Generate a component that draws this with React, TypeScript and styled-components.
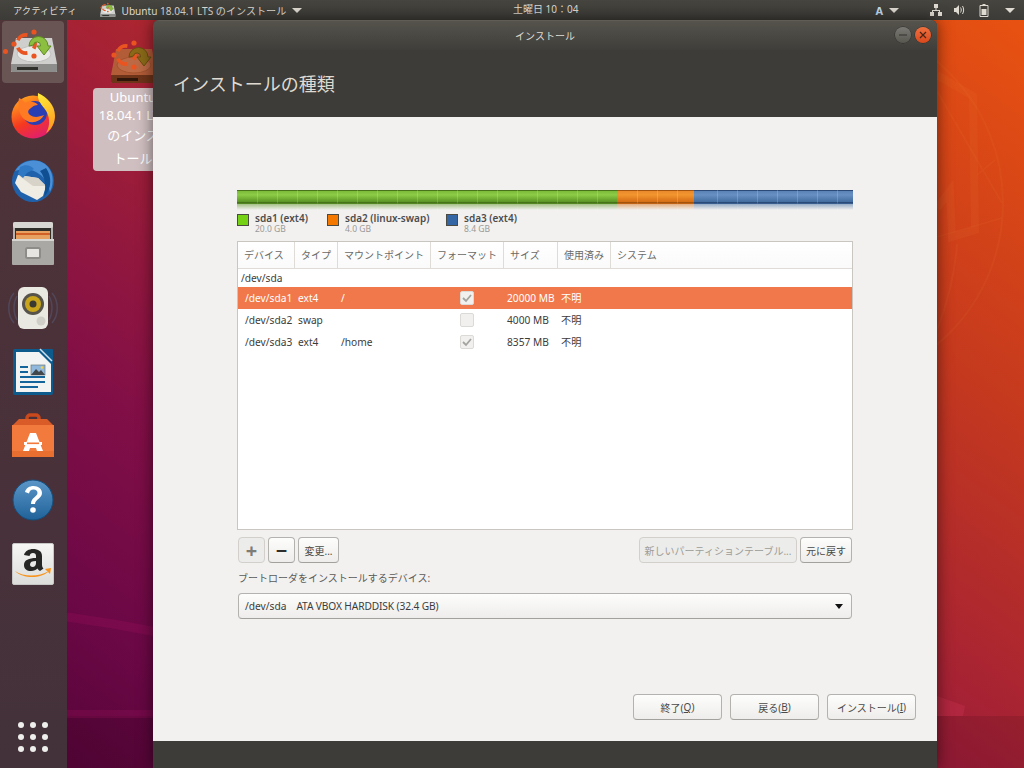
import React from "react";
import styled, { createGlobalStyle } from "styled-components";

const FONT = `"Noto Sans", "Noto Sans CJK JP", sans-serif`;

const Global = createGlobalStyle`
  html, body { margin: 0; padding: 0; width: 1024px; height: 768px; overflow: hidden; }
  body { font-family: ${FONT}; }
`;

const Screen = styled.div`
  position: relative;
  width: 1024px;
  height: 768px;
  display: flex;
  flex-direction: column;
  overflow: hidden;
  background: linear-gradient(to bottom left, #ea5310 0%, #c5391e 27%, #a32036 50%, #820f46 70%, #6c0846 85%, #520436 100%);
`;

const Wallpaper = styled.svg`
  position: absolute;
  inset: 0;
`;

const TopBar = styled.header`
  position: relative;
  height: 20px;
  flex: none;
  display: flex;
  align-items: center;
  padding: 0 9px 0 13px;
  background: linear-gradient(#46453f, #3c3b37);
  box-sizing: border-box;
  color: #dfdbd2;
  font-size: 10px;
`;

const Activities = styled.span`
  white-space: nowrap;
  font-size: 9.3px;
`;

const AppMenu = styled.div`
  display: flex;
  align-items: center;
  margin-left: 22px;
  gap: 6px;
`;

const BarLabel = styled.span`
  white-space: nowrap;
  font-size: 10.1px;
`;

const Clock = styled.span`
  position: absolute;
  left: 513px;
  top: 1px;
  white-space: nowrap;
`;

const Tray = styled.div`
  margin-left: auto;
  display: flex;
  align-items: center;
`;

const TrayItem = styled.div<{ $gap: number }>`
  display: flex;
  align-items: center;
  margin-left: ${(p) => p.$gap}px;
`;

const Caret = styled.i`
  display: block;
  width: 0;
  height: 0;
  border-left: 5px solid transparent;
  border-right: 5px solid transparent;
  border-top: 5px solid #dfdbd2;
`;

const LayoutA = styled.span`
  color: #c4dcf2;
  font-weight: 700;
  font-size: 11px;
  margin-right: 6px;
`;

const Body = styled.div`
  position: relative;
  flex: 1;
  display: flex;
`;

const Dock = styled.nav`
  position: relative;
  width: 67px;
  flex: none;
  display: flex;
  flex-direction: column;
  align-items: flex-start;
  gap: 2px;
  padding: 1px 0 0 2px;
  box-sizing: border-box;
  background: linear-gradient(#4f3438, #49313a 60%, #43323a);
`;

const DockItem = styled.div<{ $active?: boolean }>`
  position: relative;
  width: 62px;
  height: 62px;
  flex: none;
  border-radius: 4px;
  display: flex;
  align-items: center;
  justify-content: center;
  background: ${(p) => (p.$active ? "#695654" : "transparent")};
`;

const RunDot = styled.i`
  position: absolute;
  left: 1px;
  top: 28px;
  width: 5px;
  height: 5px;
  border-radius: 50%;
  background: #e95420;
`;

const DockGrid = styled.div`
  margin-top: auto;
  margin-bottom: 16px;
  margin-left: 16px;
  display: grid;
  grid-template-columns: repeat(3, 6px);
  gap: 6px;
`;

const Dot = styled.i`
  width: 6px;
  height: 6px;
  border-radius: 50%;
  background: #eeeeec;
`;

const DesktopIcon = styled.div`
  position: absolute;
  left: 93px;
  top: 18px;
  width: 80px;
  display: flex;
  flex-direction: column;
  align-items: center;
`;

const DesktopLabel = styled.div`
  width: 80px;
  height: 83px;
  box-sizing: border-box;
  border-radius: 4px;
  background: #d0bfc1;
  color: #fff;
  font-size: 13px;
  text-align: center;
  white-space: nowrap;
  overflow: hidden;
`;

const DesktopLine = styled.div<{ $h: number }>`
  height: ${(p) => p.$h}px;
  line-height: ${(p) => p.$h}px;
`;

const Win = styled.section`
  position: absolute;
  left: 153px;
  top: 0;
  width: 784px;
  height: 748px;
  display: flex;
  flex-direction: column;
  border-radius: 6px 6px 0 0;
  overflow: hidden;
  box-shadow: 0 0 16px rgba(0, 0, 0, 0.55);
  background: #3d3c38;
`;

const TitleBar = styled.div`
  height: 30px;
  flex: none;
  position: relative;
  display: flex;
  align-items: center;
  justify-content: center;
  background: linear-gradient(#55534c, #3f3e3a);
  border-top: 1px solid #5f5d55;
  box-sizing: border-box;
  color: #dfdbd2;
  font-size: 10px;
`;

const WinButtons = styled.div`
  position: absolute;
  right: 6px;
  top: 6px;
  display: flex;
  gap: 4px;
`;

const RoundBtn = styled.div<{ $close?: boolean }>`
  width: 16px;
  height: 16px;
  border-radius: 50%;
  display: flex;
  align-items: center;
  justify-content: center;
  background: ${(p) =>
    p.$close ? "linear-gradient(#f0703f, #d9481c)" : "linear-gradient(#7a7973, #57564f)"};
  box-shadow: 0 0 0 0.5px rgba(0, 0, 0, 0.4);
`;

const Heading = styled.div`
  height: 67px;
  flex: none;
  box-sizing: border-box;
  padding: 21px 0 0 20px;
  color: #dfdbd2;
  font-size: 18px;
  line-height: 26px;
  background: #3d3c38;
`;

const Content = styled.div`
  flex: 1;
  background: #f2f1f0;
  display: flex;
  flex-direction: column;
  padding: 73px 84px 21px 84px;
  color: #3c3c3c;
  font-size: 10.2px;
`;

const PartBar = styled.div`
  position: relative;
  height: 14px;
  display: flex;
  flex: none;
`;

const Segment = styled.div<{ $w: number; $top: string; $mid: string; $low: string; $edge: string; $tick: number }>`
  position: relative;
  width: ${(p) => p.$w}px;
  height: 14px;
  box-sizing: border-box;
  border-top: 1px solid ${(p) => p.$edge};
  border-bottom: 2px solid ${(p) => p.$edge};
  background: linear-gradient(${(p) => p.$top}, ${(p) => p.$mid} 35%, ${(p) => p.$low});
  &::before {
    content: "";
    position: absolute;
    left: ${(p) => p.$tick}px;
    right: 0;
    top: -1px;
    height: 21px;
    background: repeating-linear-gradient(90deg, transparent 0, transparent 19px, rgba(255, 255, 255, 0.17) 19px, rgba(255, 255, 255, 0.17) 20px);
  }
  &::after {
    content: "";
    position: absolute;
    left: 0;
    right: 0;
    top: 12px;
    height: 7px;
    background: linear-gradient(${(p) => p.$low}99, ${(p) => p.$low}00);
  }
`;

const Legend = styled.div`
  display: flex;
  margin-top: 9px;
  height: 20px;
  flex: none;
`;

const LegendItem = styled.div<{ $w: number }>`
  display: flex;
  width: ${(p) => p.$w}px;
  gap: 6px;
`;

const Swatch = styled.i<{ $c: string }>`
  width: 10px;
  height: 10px;
  margin-top: 1px;
  flex: none;
  background: ${(p) => p.$c};
  border: 1px solid #4b4b44;
`;

const LegendText = styled.div`
  display: flex;
  flex-direction: column;
`;

const LegendName = styled.span`
  font-weight: 600;
  font-size: 10px;
  line-height: 11px;
  color: #4c4c4c;
  white-space: nowrap;
`;

const LegendSize = styled.span`
  font-size: 8.5px;
  line-height: 10px;
  color: #9a9a96;
`;

const Table = styled.div`
  margin-top: 8px;
  height: 289px;
  flex: none;
  box-sizing: border-box;
  background: #fff;
  border: 1px solid #c9c6c2;
  display: flex;
  flex-direction: column;
`;

const HeadRow = styled.div`
  height: 26px;
  flex: none;
  display: flex;
  background: linear-gradient(#fff, #fafafa);
  border-bottom: 1px solid #dfdcd8;
`;

const HeadCell = styled.div<{ $w?: number }>`
  box-sizing: border-box;
  width: ${(p) => (p.$w ? `${p.$w}px` : "auto")};
  flex: ${(p) => (p.$w ? "none" : 1)};
  padding-left: 6px;
  line-height: 26px;
  font-size: 10px;
  color: #6a6a67;
  white-space: nowrap;
  border-right: ${(p) => (p.$w ? "1px solid #dfdcd8" : "none")};
`;

const DiskRow = styled.div`
  height: 18px;
  padding-left: 3px;
  line-height: 18px;
  color: #3c3c3c;
  flex: none;
`;

const Row = styled.div<{ $sel?: boolean }>`
  height: 22px;
  flex: none;
  display: flex;
  align-items: center;
  background: ${(p) => (p.$sel ? "#f1784a" : "transparent")};
  color: ${(p) => (p.$sel ? "#fff" : "#3c3c3c")};
`;

const Cell = styled.div<{ $w: number; $pad?: number }>`
  box-sizing: border-box;
  width: ${(p) => p.$w}px;
  flex: none;
  height: 14px;
  line-height: 14px;
  padding-left: ${(p) => p.$pad ?? 6}px;
  white-space: nowrap;
`;

const CheckCell = styled.div`
  width: 28px;
  flex: none;
  display: flex;
  justify-content: center;
`;

const Check = styled.div`
  width: 14px;
  height: 14px;
  box-sizing: border-box;
  border: 1px solid #dcdad7;
  border-radius: 2px;
  background: #f1f0ef;
  display: flex;
  align-items: center;
  justify-content: center;
`;

const ToolRow = styled.div`
  margin-top: 7px;
  display: flex;
  flex: none;
  padding: 0 1px;
  gap: 3px;
`;

const Spacer = styled.div`
  flex: 1;
`;

const Btn = styled.div<{ $w: number; $off?: boolean; $big?: boolean }>`
  box-sizing: border-box;
  width: ${(p) => p.$w}px;
  height: 26px;
  flex: none;
  border-radius: 4px;
  border: 1px solid ${(p) => (p.$off ? "#d3d0cc" : "#b4b2ae")};
  border-bottom-color: ${(p) => (p.$off ? "#d3d0cc" : "#a3a19d")};
  background: ${(p) => (p.$off ? "#ececea" : "linear-gradient(#fdfdfc, #eeedeb)")};
  color: ${(p) => (p.$off ? (p.$big ? "#7c7c78" : "#9c9c98") : p.$big ? "#2e2e2c" : "#4a4a48")};
  display: flex;
  align-items: center;
  justify-content: center;
  white-space: nowrap;
  font-size: ${(p) => (p.$big ? 20 : 10)}px;
  font-weight: ${(p) => (p.$big ? 700 : 400)};
`;

const FieldLabel = styled.div`
  margin-top: 7px;
  margin-left: 1px;
  height: 16px;
  line-height: 16px;
  font-size: 10px;
  flex: none;
  color: #5a5a58;
`;

const Combo = styled.div`
  margin: 7px 1px 0;
  height: 26px;
  flex: none;
  box-sizing: border-box;
  padding: 0 8px 0 6px;
  display: flex;
  align-items: center;
  gap: 10px;
  border-radius: 4px;
  border: 1px solid #b4b2ae;
  border-bottom-color: #a3a19d;
  background: linear-gradient(#fdfdfc, #eeedeb);
  color: #3c3c3c;
`;

const ComboDisk = styled.span`
  letter-spacing: -0.12px;
`;

const ComboArrow = styled.i`
  margin-left: auto;
  width: 0;
  height: 0;
  border-left: 4.5px solid transparent;
  border-right: 4.5px solid transparent;
  border-top: 5px solid #111;
`;

const Footer = styled.div`
  margin-top: auto;
  display: flex;
  justify-content: flex-end;
  gap: 8px;
  margin-right: -63px;
`;

const Under = styled.span`
  text-decoration: underline;
`;

const BottomStrip = styled.div`
  height: 27px;
  flex: none;
  background: #3d3c38;
`;

const Disk = ({ w = 52, dim = false }: { w?: number; dim?: boolean }) => {
  const h = (w * 50) / 52;
  return (
    <svg width={w} height={h} viewBox="0 0 52 50">
      <path d="M9 11h36l5 26v8H4v-8z" fill={dim ? "#b25c38" : "#cfcfcd"} />
      <path d="M4 37h46v7a1 1 0 0 1-1 1H5a1 1 0 0 1-1-1z" fill={dim ? "#6e3419" : "#8d8d8b"} />
      <rect x="10" y="40" width="21" height="3" fill={dim ? "#2f160b" : "#2f2f2b"} />
      <ellipse cx="27" cy="27" rx="17" ry="8" fill={dim ? "#bc6a45" : "#e9e9e7"} stroke={dim ? "#a4532e" : "#c0c0be"} />
      <g fill="none" stroke="#e95420" strokeWidth="3.800">
        <path d="M20.400 8.100A9 9 0 0 0 10.800 13.200" />
        <path d="M10.800 20.800A9 9 0 0 0 20.400 25.900" />
        <path d="M26.700 12.400A9 9 0 0 1 26.700 21.600" />
      </g>
      <g fill="#e95420">
        <circle cx="27" cy="5" r="2.600" />
        <circle cx="7" cy="17" r="2.600" />
        <circle cx="27" cy="29" r="2.600" />
      </g>
      <path
        d="M22 19a9.500 9.500 0 0 1 19 0h3l-7 9-7-9h3.500a3.500 3.500 0 0 0-7-1z"
        fill={dim ? "#8a6a18" : "#8cbf3f"}
        stroke={dim ? "#6a4e10" : "#5f8a23"}
      />
    </svg>
  );
};

const Firefox = () => (
  <svg width="44" height="46" viewBox="0 0 44 46">
    <defs>
      <linearGradient id="ff" x1="0.2" y1="0.1" x2="0.6" y2="1">
        <stop offset="0" stopColor="#ff9a1f" />
        <stop offset="0.55" stopColor="#f6391f" />
        <stop offset="1" stopColor="#e01f6e" />
      </linearGradient>
      <linearGradient id="ffy" x1="0.3" y1="0" x2="0.6" y2="1">
        <stop offset="0" stopColor="#ffe83a" />
        <stop offset="1" stopColor="#ff9a1f" />
      </linearGradient>
    </defs>
    <circle cx="22" cy="24" r="21.500" fill="url(#ff)" />
    <circle cx="24" cy="20" r="12" fill="#2b3fb5" />
    <path d="M8 5c3 1 5 3 6 5 4-2 10-2 13 2-3 0-5 1-7 3-3 2-4 4-1 7 4 3 9 2 14 0-3 6-11 9-17 6C9 25 6 15 8 5z" fill="#ff7b23" />
    <path d="M27 0c9 4 17 12 17 23 0 7-4 14-9 17 5-8 4-18-2-25-3-4-7-8-6-15z" fill="url(#ffy)" />
  </svg>
);

const Thunderbird = () => (
  <svg width="44" height="46" viewBox="0 0 44 46">
    <circle cx="22" cy="24" r="21" fill="#1f62ab" />
    <path d="M4 14C10 4 24 0 34 7c8 6 10 18 5 28-2-9-6-16-14-20C18 11 11 12 4 14z" fill="#4b90d6" />
    <path d="M7 18l20 3 8 8-3 10-6 4-16-8-6-9z" fill="#efece4" />
    <path d="M7 18l15 11 13 0-8-8z" fill="#d8d3c8" />
    <path d="M9 10c5-3 11-2 14 2l-7 4-4 5-5-4z" fill="#2f78c4" />
    <path d="M35 11c6 8 6 21-2 29 2-8 2-19-4-26z" fill="#0f4f92" />
  </svg>
);

const Files = () => (
  <svg width="42" height="44" viewBox="0 0 42 44">
    <rect x="1" y="0" width="40" height="43" rx="2" fill="#b4b3b0" />
    <rect x="1" y="0" width="40" height="6" rx="2" fill="#d8d7d4" />
    <rect x="3" y="6" width="36" height="13" fill="#2f2e2b" />
    <rect x="4" y="9" width="34" height="10" fill="#e8a060" />
    <rect x="4" y="11" width="34" height="2" fill="#cf5f26" />
    <rect x="0" y="17" width="42" height="26" rx="1" fill="#a9a8a5" />
    <rect x="0" y="17" width="42" height="2" fill="#d7d6d3" />
    <rect x="14" y="26" width="14" height="10" rx="1.500" fill="#e6e5e2" stroke="#8d8c89" strokeWidth="2" />
  </svg>
);

const Speaker = () => (
  <svg width="50" height="46" viewBox="0 0 50 46">
    <g fill="none" stroke="#59668a" strokeOpacity=".4" strokeWidth="1.500">
      <path d="M6 8c-7 8-7 22 0 30" />
      <path d="M9 11c-4 7-4 17 0 24" />
      <path d="M44 8c7 8 7 22 0 30" />
      <path d="M41 11c4 7 4 17 0 24" />
    </g>
    <rect x="10" y="2" width="30" height="42" rx="6" fill="#e9e8e1" />
    <circle cx="25" cy="19" r="11" fill="#55534a" />
    <circle cx="25" cy="19" r="8" fill="#c9a51c" />
    <circle cx="25" cy="19" r="3.500" fill="#3a3a33" />
    <circle cx="33" cy="36" r="4.500" fill="#cfcec7" />
  </svg>
);

const Writer = () => (
  <svg width="42" height="48" viewBox="0 0 42 48">
    <path d="M1 3a2 2 0 0 1 2-2h28l10 10v34a2 2 0 0 1-2 2H3a2 2 0 0 1-2-2z" fill="#0d5a8d" />
    <path d="M29 1h11a1 1 0 0 1 1 1v11z" fill="#0d5a8d" />
    <path d="M4 4h23l12 12v28H4z" fill="#f2f4f4" />
    <path d="M28 1l12 12" stroke="#cfe0ea" strokeWidth="1.500" />
    <rect x="8" y="18" width="8" height="2" fill="#13659c" />
    <rect x="8" y="23" width="8" height="2" fill="#13659c" />
    <rect x="8" y="28" width="25" height="2" fill="#13659c" />
    <rect x="8" y="33" width="25" height="2" fill="#13659c" />
    <rect x="8" y="38" width="18" height="2" fill="#13659c" />
    <rect x="19" y="17" width="14" height="10" fill="#8fb8dc" stroke="#6c7a80" strokeWidth=".7" />
    <path d="M19 27l5-6 3 3 2-2 4 5z" fill="#41474a" />
    <circle cx="30" cy="19.500" r="1.300" fill="#f4d24a" />
  </svg>
);

const Store = () => (
  <svg width="42" height="46" viewBox="0 0 42 46">
    <path d="M15 14V5a3 3 0 0 1 3-3h6a3 3 0 0 1 3 3v9" fill="none" stroke="#c9481c" strokeWidth="3.500" />
    <path d="M7 6h28l7 7H0z" fill="#d95c28" />
    <path d="M0 12h42v32H0z" fill="#f27a3c" />
    <path d="M0 38h42v6H0z" fill="#e86f30" />
    <path d="M18 20h6l7 18h-6l-1-3h-6l-1 3h-6z" fill="#fff" />
    <rect x="12" y="29" width="18" height="3" fill="#fff" />
    <rect x="15" y="29.500" width="12" height="1.600" fill="#f27a3c" />
  </svg>
);

const Help = () => (
  <svg width="42" height="42" viewBox="0 0 42 42">
    <defs>
      <linearGradient id="hp" x1="0" y1="0" x2="0" y2="1">
        <stop offset="0" stopColor="#5c96c8" />
        <stop offset="1" stopColor="#1f6299" />
      </linearGradient>
    </defs>
    <circle cx="21" cy="21" r="20" fill="url(#hp)" stroke="#14507f" />
    <path d="M13 13c1-4 4.500-6 8.500-6 5 0 8.500 3 8.500 7 0 5.500-6.500 6-7 11h-4c0-6.500 6.500-7.500 6.500-11 0-2-1.500-3.500-4-3.500s-4 1.500-4.500 4z" fill="#fff" />
    <circle cx="21" cy="31" r="2.800" fill="#fff" />
  </svg>
);

const Amazon = () => (
  <svg width="42" height="42" viewBox="0 0 42 42">
    <defs>
      <linearGradient id="az" x1="0" y1="0" x2="0" y2="1">
        <stop offset="0" stopColor="#f6f6f5" />
        <stop offset="1" stopColor="#dcdcdb" />
      </linearGradient>
    </defs>
    <rect x=".5" y=".5" width="41" height="41" rx="1.500" fill="url(#az)" stroke="#c7c7c6" />
    <path d="M12 12c1-4 5-6 9-6 5 0 9 2 9 7v9c0 2 1 3 1.500 3.500L28 28c-1-.5-2-1.500-2.500-2.500C24 27 22 28 19 28c-4 0-7-2-7-6 0-5 5-7 12-7v-2c0-2-1-3-3-3s-3 1-3.500 3zm12 6c-4 0-6 1-6 3.500 0 1.500 1 2.500 2.500 2.500 2.500 0 3.500-2 3.500-4z" fill="#262624" />
    <path d="M3 28c9 6 23 6 34 0-8 8-26 8-34 0z" fill="#f7941d" />
    <path d="M33 26l6-1-1 6z" fill="#f7941d" />
  </svg>
);

const Net = () => (
  <svg width="12" height="12" viewBox="0 0 12 12" fill="#dfdbd2">
    <rect x="4" y="0" width="4" height="4" />
    <rect x="0" y="8" width="4" height="4" />
    <rect x="8" y="8" width="4" height="4" />
    <path d="M5.500 4h1v2H10v2H9V7H3v1H2V6h3.500z" />
  </svg>
);

const Vol = () => (
  <svg width="12" height="12" viewBox="0 0 12 12" fill="#dfdbd2">
    <path d="M0 4h2l3-3v10L2 8H0z" />
    <path d="M6.500 3.500c1 1.500 1 3.500 0 5M8.500 2c1.500 2.500 1.500 5.500 0 8" fill="none" stroke="#dfdbd2" />
  </svg>
);

const Battery = () => (
  <svg width="10" height="14" viewBox="0 0 10 14" fill="none" stroke="#dfdbd2">
    <path d="M3.500 1.500h3M1 2.500h8v11H1z" />
    <rect x="2.500" y="6" width="5" height="6" fill="#dfdbd2" stroke="none" />
  </svg>
);

const Tick = () => (
  <svg width="10" height="10" viewBox="0 0 10 10">
    <path d="M1 5l3 3 5-6" fill="none" stroke="#a3a3a0" strokeWidth="1.800" />
  </svg>
);

const W = [57, 43, 93, 73, 54, 53];

const rows = [
  { d: "/dev/sda1", t: "ext4", m: "/", c: true, s: "20000 MB", sel: true },
  { d: "/dev/sda2", t: "swap", m: "", c: false, s: "4000 MB", sel: false },
  { d: "/dev/sda3", t: "ext4", m: "/home", c: true, s: "8357 MB", sel: false },
];

export default function App() {
  return (
    <Screen>
      <Global />
      <Wallpaper width="1024" height="768" viewBox="0 0 1024 768">
        <g fill="none" stroke="#f6a04a" strokeOpacity=".07">
          <path d="M937 75l36 21 2 134-23 7-2-46-13 17" strokeWidth="8" />
          <circle cx="818" cy="203" r="185" strokeWidth="2" />
          <path d="M957 244c-2 30-10 60-20 86" strokeWidth="2" />
          <path d="M937 91l65 112M977 175l18-15M937 237l65-19" strokeWidth="1.500" />
        </g>
        <rect x="0" y="716" width="1024" height="52" fill="#000" fillOpacity=".1" />
        <g fill="none" stroke="#c01a6c" strokeOpacity=".17">
          <path d="M67 617c30 4 60 9 90 15" strokeWidth="9" />
          <path d="M67 714h90" strokeWidth="8" />
        </g>
        <path d="M937 696l28 10-2 10h-26z" fill="#c83450" fillOpacity=".35" />
      </Wallpaper>
      <TopBar>
        <Activities>アクティビティ</Activities>
        <AppMenu>
          <Disk w={17} />
          <BarLabel>Ubuntu 18.04.1 LTS のインストール</BarLabel>
          <Caret />
        </AppMenu>
        <Clock>土曜日 10：04</Clock>
        <Tray>
          <LayoutA>A</LayoutA>
          <Caret />
          <TrayItem $gap={31}><Net /></TrayItem>
          <TrayItem $gap={12}><Vol /></TrayItem>
          <TrayItem $gap={13}><Battery /></TrayItem>
          <TrayItem $gap={16}><Caret /></TrayItem>
        </Tray>
      </TopBar>
      <Body>
        <Dock>
          <DockItem $active>
            <RunDot />
            <Disk />
          </DockItem>
          <DockItem><Firefox /></DockItem>
          <DockItem><Thunderbird /></DockItem>
          <DockItem><Files /></DockItem>
          <DockItem><Speaker /></DockItem>
          <DockItem><Writer /></DockItem>
          <DockItem><Store /></DockItem>
          <DockItem><Help /></DockItem>
          <DockItem><Amazon /></DockItem>
          <DockGrid>
            {Array.from({ length: 9 }, (_, i) => (
              <Dot key={i} />
            ))}
          </DockGrid>
        </Dock>
        <DesktopIcon>
          <Disk dim />
          <DesktopLabel>
            <DesktopLine $h={19}>Ubuntu</DesktopLine>
            <DesktopLine $h={17}>18.04.1 LTS</DesktopLine>
            <DesktopLine $h={22}>のインス</DesktopLine>
            <DesktopLine $h={24}>トール</DesktopLine>
          </DesktopLabel>
        </DesktopIcon>
        <Win>
          <TitleBar>
            インストール
            <WinButtons>
              <RoundBtn>
                <svg width="10" height="10" viewBox="0 0 10 10">
                  <path d="M1 5h8" stroke="#33332f" strokeWidth="1.200" />
                </svg>
              </RoundBtn>
              <RoundBtn $close>
                <svg width="10" height="10" viewBox="0 0 10 10">
                  <path d="M2 2l6 6M8 2l-6 6" stroke="#4a2414" strokeWidth="1.200" />
                </svg>
              </RoundBtn>
            </WinButtons>
          </TitleBar>
          <Heading>インストールの種類</Heading>
          <Content>
            <PartBar>
              <Segment $w={380} $top="#7cba3a" $mid="#8ccc46" $low="#5a9424" $edge="#47741a" $tick={1} />
              <Segment $w={77} $top="#e98a2c" $mid="#f2962f" $low="#d46c14" $edge="#a2540e" $tick={1} />
              <Segment $w={159} $top="#5a82b5" $mid="#6890c2" $low="#426b9f" $edge="#2b4a78" $tick={4} />
            </PartBar>
            <Legend>
              <LegendItem $w={90}>
                <Swatch $c="#74d114" />
                <LegendText>
                  <LegendName>sda1 (ext4)</LegendName>
                  <LegendSize>20.0 GB</LegendSize>
                </LegendText>
              </LegendItem>
              <LegendItem $w={119}>
                <Swatch $c="#f57900" />
                <LegendText>
                  <LegendName>sda2 (linux-swap)</LegendName>
                  <LegendSize>4.0 GB</LegendSize>
                </LegendText>
              </LegendItem>
              <LegendItem $w={100}>
                <Swatch $c="#3465a4" />
                <LegendText>
                  <LegendName>sda3 (ext4)</LegendName>
                  <LegendSize>8.4 GB</LegendSize>
                </LegendText>
              </LegendItem>
            </Legend>
            <Table>
              <HeadRow>
                <HeadCell $w={W[0]}>デバイス</HeadCell>
                <HeadCell $w={W[1]}>タイプ</HeadCell>
                <HeadCell $w={W[2]}>マウントポイント</HeadCell>
                <HeadCell $w={W[3]}>フォーマット</HeadCell>
                <HeadCell $w={W[4]}>サイズ</HeadCell>
                <HeadCell $w={W[5]}>使用済み</HeadCell>
                <HeadCell>システム</HeadCell>
              </HeadRow>
              <DiskRow>/dev/sda</DiskRow>
              {rows.map((r) => (
                <Row key={r.d} $sel={r.sel}>
                  <Cell $w={54} $pad={7}>{r.d}</Cell>
                  <Cell $w={43}>{r.t}</Cell>
                  <Cell $w={118}>{r.m}</Cell>
                  <CheckCell>
                    <Check>{r.c && <Tick />}</Check>
                  </CheckCell>
                  <Cell $w={74} $pad={26}>{r.s}</Cell>
                  <Cell $w={53}>不明</Cell>
                </Row>
              ))}
            </Table>
            <ToolRow>
              <Btn $w={27} $off $big>+</Btn>
              <Btn $w={27} $big>−</Btn>
              <Btn $w={41}>変更...</Btn>
              <Spacer />
              <Btn $w={158} $off>新しいパーティションテーブル...</Btn>
              <Btn $w={52}>元に戻す</Btn>
            </ToolRow>
            <FieldLabel>ブートローダをインストールするデバイス:</FieldLabel>
            <Combo>
              <span>/dev/sda</span>
              <ComboDisk>ATA VBOX HARDDISK (32.4 GB)</ComboDisk>
              <ComboArrow />
            </Combo>
            <Footer>
              <Btn $w={89}>終了(<Under>Q</Under>)</Btn>
              <Btn $w={89}>戻る(<Under>B</Under>)</Btn>
              <Btn $w={89}>インストール(<Under>I</Under>)</Btn>
            </Footer>
          </Content>
          <BottomStrip />
        </Win>
      </Body>
    </Screen>
  );
}
